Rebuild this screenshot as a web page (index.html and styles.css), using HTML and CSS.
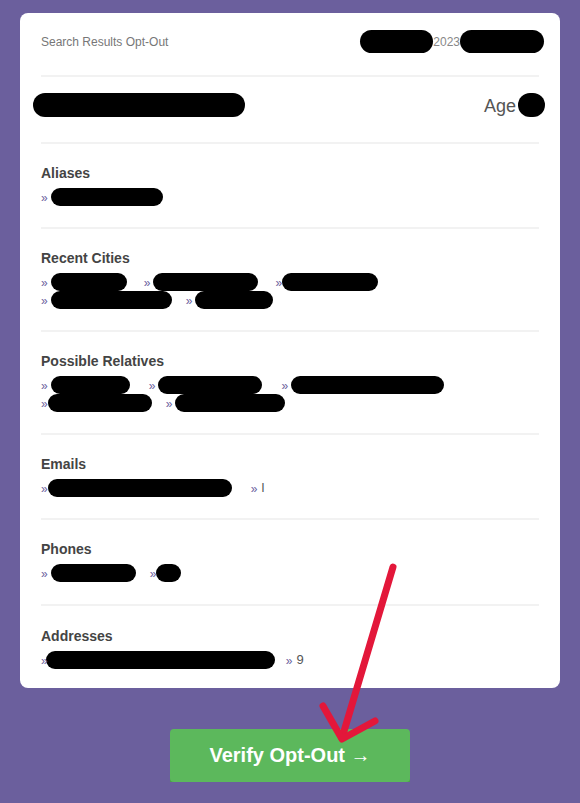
FILE: index.html
```html
<!DOCTYPE html>
<html lang="en">
<head>
    <meta charset="UTF-8">
    <meta name="viewport" content="width=device-width, initial-scale=1.0">
    <title>Search Results Opt-Out</title>
    <link rel="stylesheet" href="styles.css">
</head>
<body>
    <div class="page">
        <div class="result-card">
            <div class="card-top">
                <span class="crumb">Search Results Opt-Out</span>
                <span class="date">
                    <span class="blot" style="width:73px"></span>2023<span class="blot blot-end" style="width:84px"></span>
                </span>
            </div>

            <div class="person">
                <span class="blot blot-name" style="width:212px"></span>
                <span class="age">Age <span class="blot blot-age" style="width:27px"></span></span>
            </div>

            <!-- 結果區塊 -->
            <div class="section">
                <h3>Aliases</h3>
                <div class="row">
                    <span class="item"><span class="mark">»</span><span class="blot" style="width:112px"></span></span>
                </div>
            </div>

            <div class="section">
                <h3>Recent Cities</h3>
                <div class="row">
                    <span class="item"><span class="mark">»</span><span class="blot" style="width:76px"></span></span>
                    <span class="item"><span class="mark">»</span><span class="blot" style="width:105px"></span></span>
                    <span class="item"><span class="mark">»</span><span class="blot blot-tight" style="width:96px"></span></span>
                </div>
                <div class="row">
                    <span class="item"><span class="mark">»</span><span class="blot" style="width:121px"></span></span>
                    <span class="item item-near"><span class="mark">»</span><span class="blot" style="width:78px"></span></span>
                </div>
            </div>

            <div class="section">
                <h3>Possible Relatives</h3>
                <div class="row">
                    <span class="item"><span class="mark">»</span><span class="blot" style="width:79px"></span></span>
                    <span class="item item-far"><span class="mark">»</span><span class="blot" style="width:104px"></span></span>
                    <span class="item item-far"><span class="mark">»</span><span class="blot" style="width:153px"></span></span>
                </div>
                <div class="row">
                    <span class="item"><span class="mark">»</span><span class="blot blot-tight" style="width:104px"></span></span>
                    <span class="item item-near"><span class="mark">»</span><span class="blot" style="width:110px"></span></span>
                </div>
            </div>

            <div class="section">
                <h3>Emails</h3>
                <div class="row">
                    <span class="item"><span class="mark">»</span><span class="blot blot-tight" style="width:184px"></span></span>
                    <span class="item item-far"><span class="mark">»</span><span class="val">l</span></span>
                </div>
            </div>

            <div class="section section-phones">
                <h3>Phones</h3>
                <div class="row">
                    <span class="item"><span class="mark">»</span><span class="blot" style="width:85px"></span></span>
                    <span class="item item-near"><span class="mark">»</span><span class="blot blot-tight" style="width:25px"></span></span>
                </div>
            </div>

            <div class="section">
                <h3>Addresses</h3>
                <div class="row">
                    <span class="item"><span class="mark">»</span><span class="blot blot-over" style="width:229px"></span></span>
                    <span class="item item-close"><span class="mark">»</span><span class="val">9</span></span>
                </div>
            </div>
        </div>

        <button type="button" class="verify-button">Verify Opt-Out →</button>
    </div>

    <!-- 紅色標註箭頭 -->
    <svg class="arrow" width="580" height="803" viewBox="0 0 580 803">
        <g fill="none" stroke="#e3173a" stroke-width="7" stroke-linecap="round" stroke-linejoin="round">
            <path d="M393 567 L342 738"/>
            <path d="M323 706 L342 739 L375 721"/>
        </g>
    </svg>
</body>
</html>
```

FILE: styles.css
```css
body {
    margin: 0;
    background-color: #6b5f9d;
    font-family: "Liberation Sans", Arial, sans-serif;
}

.page {
    padding: 13px 20px 0;
    display: flex;
    flex-direction: column;
    align-items: center;
}

.result-card {
    width: 540px;
    box-sizing: border-box;
    padding: 17px 21px 0;
    background-color: #ffffff;
    border-radius: 8px;
}

.card-top {
    display: flex;
    justify-content: space-between;
    align-items: center;
    height: 23px;
    padding-bottom: 22px;
    border-bottom: 2px solid #f2f2f2;
}

.crumb {
    font-size: 12px;
    color: #777;
}

.date {
    display: flex;
    align-items: center;
    font-size: 12px;
    color: #888;
}

.blot {
    display: inline-block;
    height: 18px;
    background-color: #000;
    border-radius: 9px;
    vertical-align: top;
    margin-left: 3px;
}

.date .blot {
    height: 23px;
    border-radius: 12px;
    margin-left: 0;
}

.date .blot-end {
    margin-right: -5px;
}

.person {
    display: flex;
    justify-content: space-between;
    align-items: center;
    height: 24px;
    padding: 16px 0 25px;
}

.person .blot {
    height: 24px;
    border-radius: 12px;
}

.blot-name {
    margin-left: -8px;
}

.age {
    display: flex;
    align-items: center;
    font-size: 18px;
    color: #555;
    margin-right: -6px;
    padding-top: 2px;
}

.age .blot-age {
    margin-left: 2px;
    margin-top: -2px;
}

.section {
    border-top: 2px solid #f2f2f2;
    padding: 21px 0;
}

.section-phones {
    padding-bottom: 22px;
}

.section:last-child {
    padding-top: 22px;
    padding-bottom: 19px;
}

.section h3 {
    margin: 0 0 7px;
    font-size: 14px;
    line-height: 16px;
    font-weight: bold;
    color: #444;
}

.row {
    display: flex;
    height: 18px;
    line-height: 18px;
}

.item {
    display: flex;
    margin-right: 17px;
}

.item-near {
    margin-left: -3px;
}

.item-far {
    margin-left: 2px;
}

.item-close {
    margin-left: -6px;
}

.mark {
    font-size: 12px;
    color: #6b5f9d;
    position: relative;
    top: 1px;
}

.blot-tight {
    margin-left: 0;
}

.blot-over {
    margin-left: -2px;
}

.val {
    font-size: 13px;
    color: #555;
    margin-left: 4px;
}

.verify-button {
    margin-top: 41px;
    width: 240px;
    height: 53px;
    background-color: #5cb85c;
    border: none;
    border-radius: 4px;
    box-shadow: 0 3px 0 #4a9e4a;
    color: white;
    font-family: "Liberation Sans", Arial, sans-serif;
    font-size: 20px;
    font-weight: bold;
    cursor: pointer;
}

.verify-button:hover {
    background-color: #4cae4c;
}

.arrow {
    position: absolute;
    top: 0;
    left: 0;
    pointer-events: none;
}
```
